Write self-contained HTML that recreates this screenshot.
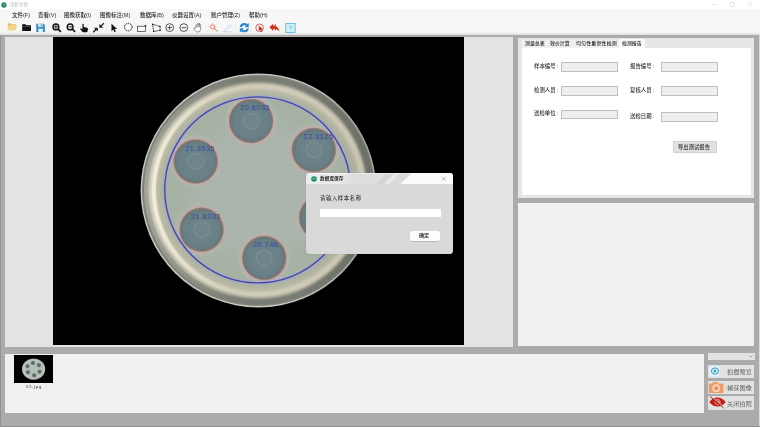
<!DOCTYPE html>
<html lang="zh">
<head>
<meta charset="utf-8">
<title>泽析生物</title>
<style>
html,body{margin:0;padding:0;}
body{width:760px;height:427px;overflow:hidden;background:#ababab;position:relative;
 font-family:"Liberation Sans","Noto Sans CJK SC",sans-serif;color:#000;}
.abs{position:absolute;}
svg{will-change:transform;}
#titlebar{left:0;top:0;width:760px;height:11px;background:#fff;}
#menubar{left:0;top:8.8px;width:760px;height:12.2px;background:#f7f7f7;}
#toolbar{left:0;top:21px;width:760px;height:13.9px;background:linear-gradient(#f7f7f7 0%,#f7f7f7 62%,#f1f1f1 86%,#dadada 100%);}
.t{position:absolute;white-space:nowrap;line-height:1;will-change:transform;}
.menu{font-size:5.5px;top:13.1px;color:#2a2a2a;font-weight:500;}
#canvasPanel{left:5px;top:36.8px;width:508px;height:309.9px;background:#e3e3e3;}
#canvas{left:53.1px;top:37.2px;width:411.3px;height:308.2px;background:#000;}
#rightTop{left:518px;top:38.3px;width:235.9px;height:159.6px;background:#e6e6e6;}
#tabStrip{left:521.8px;top:39.6px;width:97.4px;height:8.6px;background:#f0f0f0;}
#tabBody{left:521.8px;top:48.1px;width:228.8px;height:146.7px;background:#fff;}
#tabSel{left:619px;top:39.3px;width:26.2px;height:9px;background:#fafafa;}
.tab{font-size:4.95px;top:42px;color:#2a2a2a;font-weight:500;}
.lbl{font-size:5.4px;color:#333;font-weight:500;}
.inp{position:absolute;background:#efefef;border:1px solid #bfbfbf;box-sizing:border-box;}
#rightBottom{left:518px;top:202.9px;width:236.4px;height:143.4px;background:#f0f0f0;}
#bottomPanel{left:5px;top:354px;width:698.7px;height:59px;background:#f0f0f0;}
#thumb{left:14px;top:355px;width:39.1px;height:27.7px;background:#000;}
.btn{position:absolute;background:#e1e1e1;border:1px solid #d2d2d2;box-sizing:border-box;}
.sbtn{position:absolute;left:708px;width:45.9px;height:13px;background:#e2e2e2;}
.sbtn .t{font-size:6.1px;left:18.8px;top:3.3px;letter-spacing:0.12px;color:#1a1a1a;font-weight:300;}
#combo{left:707.8px;top:352.7px;width:46.9px;height:7.1px;background:#e3e3e3;}
#dialog{left:306.2px;top:173.2px;width:146.7px;height:81.1px;background:#d9d9d9;border-radius:3.5px;overflow:hidden;box-shadow:0 0 1px rgba(0,0,0,.35);}
#dlgTitle{left:0;top:0;width:100%;height:11.3px;background:linear-gradient(135deg,rgba(222,222,222,0) 0%,rgba(222,222,222,0) 50.5%,#d4d4d4 52.5%,#d4d4d4 55.5%,#e9e9e9 56.8%,#e9e9e9 59%,#dbdbdb 59.6%,#dbdbdb 66.4%,#fbfbfb 67.2%,#fbfbfb 100%),linear-gradient(90deg,#ececec 0%,#ececec 21%,#dedede 31%,#dedede 100%);box-shadow:inset 0 0.8px 0 rgba(255,255,255,0.55);}
</style>
</head>
<body>
<div id="titlebar" class="abs">
  <svg class="abs" style="left:0.8px;top:1.6px" width="6" height="6" viewBox="0 0 6 6"><circle cx="2.9" cy="3" r="2.65" fill="#178a6e"/><path d="M1.6 3.5 L2.6 2.3 L3.3 3.2 L4.3 1.9" stroke="#a8e6d2" stroke-width="0.6" fill="none"/></svg>
  <span class="t" style="left:9.8px;top:2.7px;font-size:4.4px;letter-spacing:0.1px;color:#b6b6b6;">泽析生物</span>
  <svg class="abs" style="left:705px;top:0" width="55" height="10" viewBox="705 0 55 10"><g stroke="#c6c6c6" stroke-width="0.45" fill="none"><path d="M712.2 4.6 h4"/><rect x="730.2" y="2.4" width="3.9" height="3.9"/><path d="M748.1 2.3 l4 4 M752.1 2.3 l-4 4"/></g></svg>
</div>
<div id="menubar" class="abs"></div>
<span class="t menu" style="left:12px">文件(F)</span>
<span class="t menu" style="left:37.8px">查看(V)</span>
<span class="t menu" style="left:64.1px">图像获取(I)</span>
<span class="t menu" style="left:100.4px">图像标注(M)</span>
<span class="t menu" style="left:140.2px">数据库(B)</span>
<span class="t menu" style="left:172.2px">仪器设置(A)</span>
<span class="t menu" style="left:210.8px">账户管理(Z)</span>
<span class="t menu" style="left:248.8px">帮助(H)</span>
<div id="toolbar" class="abs"></div>
<svg id="tbicons" class="abs" style="left:0;top:21px" width="300" height="15" viewBox="0 21 300 15">
  <!-- open folder (yellow) -->
  <path d="M7.8 23.3 h3.2 l0.9 1 h4.2 v1.4 h-6.6 l-1.7 4.4 z" fill="#efbf66"/>
  <path d="M9.5 25.7 h7.6 l-1.6 4.9 h-7.7 z" fill="#f6d48c"/>
  <!-- black folder -->
  <path d="M22.2 24.2 h3.3 l0.9 1 h4.6 v5.8 h-8.8 z" fill="#111"/>
  <rect x="22.2" y="26.1" width="8.8" height="0.45" fill="#777"/>
  <!-- save -->
  <path d="M36.2 23.8 h7.4 l1.3 1.3 v6.8 h-8.7 z" fill="#378fc6"/>
  <rect x="38" y="23.8" width="5" height="3.1" fill="#c6e6f5"/>
  <rect x="41.3" y="24.2" width="1" height="2.1" fill="#378fc6"/>
  <rect x="38.4" y="28.8" width="4.4" height="3.1" fill="#eef7fc"/>
  <!-- zoom in -->
  <g stroke="#111" fill="none" stroke-linecap="round">
    <circle cx="55.9" cy="26.9" r="2.9" stroke-width="1.4"/>
    <path d="M58.2 29.2 L60.4 31.3" stroke-width="1.7"/>
    <path d="M54.4 26.9 h3 M55.9 25.4 v3" stroke-width="0.9"/>
    <circle cx="70.1" cy="26.9" r="2.9" stroke-width="1.4"/>
    <path d="M72.4 29.2 L74.6 31.3" stroke-width="1.7"/>
    <path d="M68.6 26.9 h3" stroke-width="0.9"/>
  </g>
  <!-- pointing hand (filled) -->
  <path d="M82.4 24 q0.7 -0.6 1.3 0 v3 l3.4 0.7 q0.9 0.3 0.8 1.3 l-0.4 2.4 q-0.2 0.8 -1 0.8 h-3.2 q-0.7 0 -1.1 -0.6 l-2.1 -2.7 q0.4 -0.9 1.3 -0.4 l1 0.9 z" fill="#111"/>
  <!-- shrink arrows -->
  <g fill="#1a1a1a" stroke="#1a1a1a" stroke-width="1.3">
    <path d="M103.8 23.2 L100.6 26.4" fill="none"/>
    <path d="M99.3 23.9 v3.9 h3.9 z" stroke="none"/>
    <path d="M93.2 32.2 L96.4 29" fill="none"/>
    <path d="M97.8 31.6 v-3.9 h-3.9 z" stroke="none"/>
  </g>
  <!-- cursor -->
  <path d="M111.5 23.8 v7.4 l1.8 -1.6 l1.2 2.6 l1.3 -0.6 l-1.2 -2.5 h2.5 z" fill="#111"/>
  <!-- dashed circle -->
  <circle cx="128.3" cy="27.1" r="3.8" fill="none" stroke="#222" stroke-width="1" stroke-dasharray="1.6 0.8"/>
  <!-- rectangle -->
  <rect x="137.4" y="26.2" width="8.1" height="5.2" fill="none" stroke="#222" stroke-width="0.65"/>
  <path d="M144.4 25.8 h2.2 M145.5 24.8 v2" stroke="#111" stroke-width="0.6"/>
  <!-- polygon -->
  <path d="M152.6 24.3 L160 26.4 L160.1 30.4 L153.6 31.4 Z" fill="none" stroke="#222" stroke-width="0.65"/>
  <g fill="#111"><rect x="152" y="23.7" width="1.2" height="1.2"/><rect x="159.4" y="25.8" width="1.2" height="1.2"/><rect x="159.5" y="29.8" width="1.2" height="1.2"/><rect x="153" y="30.8" width="1.2" height="1.2"/></g>
  <!-- plus / minus circle -->
  <g fill="none" stroke="#111" stroke-width="0.7">
    <circle cx="169.7" cy="27.6" r="3.9"/><path d="M167.5 27.6 h4.4 M169.7 25.4 v4.4"/>
    <circle cx="183.8" cy="27.6" r="3.9"/><path d="M181.6 27.6 h4.4"/>
  </g>
  <!-- open hand outline -->
  <path d="M196 27.8 v-2.8 q0.55 -0.8 1.1 0 v-1.1 q0.6 -0.8 1.2 0 v-0.4 q0.6 -0.8 1.2 0 v1.1 q0.55 -0.7 1.1 0 v4.4 q0 3 -2.8 3 q-1.7 0 -2.6 -1.4 l-1.4 -2.4 q0.5 -0.9 1.3 -0.2 z M197.1 25 v2.2 M198.3 24 v3.2 M199.5 23.6 v3.6" fill="#fff" stroke="#555" stroke-width="0.6" stroke-linejoin="round"/>
  <!-- magnifier red -->
  <g stroke="#e2604a" fill="none" stroke-linecap="round">
    <circle cx="212.6" cy="26.8" r="2.1" stroke-width="0.7"/>
    <path d="M214.3 28.5 L217.6 31.4" stroke-width="0.9"/>
    <path d="M212.6 23.4 v0.8 M212.6 29.4 v0.8 M209.2 26.8 h0.8 M215.2 26.8 h0.8 M210.2 24.4 l0.6 0.6 M215 24.4 l-0.6 0.6 M210.2 29.2 l0.6 -0.6" stroke-width="0.5" stroke="#ef9a7a"/>
  </g>
  <!-- pencil light -->
  <g stroke="#b9d6ec" fill="none" stroke-width="0.7">
    <path d="M224.4 29.8 L229.8 24.4 L231.4 26 L226 31.2 L223.8 31.6 Z" fill="#eef5fb"/>
    <path d="M223 31.8 h9.4"/>
  </g>
  <!-- refresh -->
  <g fill="#2887cf" transform="translate(244.3 27.7) scale(1.15) translate(-244 -27.6)">
    <path d="M240 27 q0.6 -3.4 4.2 -3.4 q1.6 0 2.6 0.9 l1.1 -1 v3.6 h-3.6 l1.2 -1.2 q-0.6 -0.5 -1.4 -0.5 q-1.8 0 -2.3 1.6 z"/>
    <path d="M248 28.2 q-0.6 3.4 -4.2 3.4 q-1.6 0 -2.6 -0.9 l-1.1 1 v-3.6 h3.6 l-1.2 1.2 q0.6 0.5 1.4 0.5 q1.8 0 2.3 -1.6 z"/>
  </g>
  <!-- red circle cursor -->
  <circle cx="259.6" cy="27.8" r="3.8" fill="none" stroke="#c02a1c" stroke-width="0.7"/>
  <path d="M258.8 25.4 v5.6 l1.4 -1.2 l1.1 2.3 l1 -0.5 l-1.1 -2.2 h2 z" fill="#cf2a1a"/>
  <!-- red back arrow -->
  <path d="M269.4 27.2 L273.2 23.8 v1.9 q5.6 0.2 6 5.8 q-1.8 -2.9 -6 -2.8 v2.2 z" fill="#d8301c"/>
  <path d="M272.6 27.2 L276 24 v1.8 l-1.8 1.4 l1.8 1.6 v1.6 z" fill="#d8301c"/>
  <!-- help -->
  <rect x="285.7" y="23.5" width="9.4" height="9" fill="#cfeff6" stroke="#55c0da" stroke-width="0.9"/>
  <text x="288.9" y="30.2" font-size="6" font-family="'Liberation Sans',sans-serif" fill="#3fb2d0">?</text>
  <!-- separators -->
  <g stroke="#e2e2e2" stroke-width="0.4"><path d="M48.6 23 v10 M106.4 23 v10 M206 23 v10 M236 23 v10 M251.6 23 v10 M282.6 23 v10"/></g>
</svg>

<div id="canvasPanel" class="abs"></div>
<div id="canvas" class="abs"></div>
<svg id="dish" class="abs" style="left:53px;top:37px" width="412" height="309" viewBox="53 37 412 309">
  <defs>
    <radialGradient id="rim" cx="0.5" cy="0.5" r="0.5">
      <stop offset="0" stop-color="#abb5ad"/>
      <stop offset="0.5" stop-color="#aab4ab"/>
      <stop offset="0.76" stop-color="#a5b1a2"/>
      <stop offset="0.797" stop-color="#a9b2a2"/>
      <stop offset="0.82" stop-color="#b0b4a2"/>
      <stop offset="0.85" stop-color="#b8b8a6"/>
      <stop offset="0.875" stop-color="#cdc9b4"/>
      <stop offset="0.895" stop-color="#d2ceb8"/>
      <stop offset="0.915" stop-color="#b4b2a4"/>
      <stop offset="0.93" stop-color="#8a8c80"/>
      <stop offset="0.945" stop-color="#787c72"/>
      <stop offset="0.975" stop-color="#797d73"/>
      <stop offset="0.985" stop-color="#8c9084"/>
      <stop offset="0.992" stop-color="#c8ccc6"/>
      <stop offset="1" stop-color="#c4c8c2"/>
    </radialGradient>
    <linearGradient id="hl" gradientUnits="userSpaceOnUse" x1="140" y1="0" x2="236" y2="0">
      <stop offset="0" stop-color="#fffbe8" stop-opacity="0.8"/>
      <stop offset="1" stop-color="#fffbe8" stop-opacity="0"/>
    </linearGradient>
    <linearGradient id="dk" gradientUnits="userSpaceOnUse" x1="290" y1="0" x2="376" y2="0">
      <stop offset="0" stop-color="#4a4e46" stop-opacity="0"/>
      <stop offset="1" stop-color="#4a4e46" stop-opacity="0.28"/>
    </linearGradient>
    <radialGradient id="zone" cx="0.5" cy="0.5" r="0.5">
      <stop offset="0" stop-color="#6f868b"/>
      <stop offset="0.252" stop-color="#6e8489"/>
      <stop offset="0.285" stop-color="#7d9296"/>
      <stop offset="0.32" stop-color="#6c8388"/>
      <stop offset="0.64" stop-color="#688086"/>
      <stop offset="0.715" stop-color="#637c81"/>
      <stop offset="0.745" stop-color="#6e7672"/>
      <stop offset="0.79" stop-color="#8a7674"/>
      <stop offset="0.815" stop-color="#a48c88"/>
      <stop offset="0.84" stop-color="#bcaeaa"/>
      <stop offset="0.885" stop-color="#baaeaa"/>
      <stop offset="0.915" stop-color="#aeb4a8"/>
      <stop offset="0.96" stop-color="#aeb8ac" stop-opacity="0.8"/>
      <stop offset="1" stop-color="#acb6ac" stop-opacity="0"/>
    </radialGradient>
    <filter id="tb" x="-5%" y="-20%" width="110%" height="140%"><feGaussianBlur stdDeviation="0.32"/></filter>
    <mask id="ringmask"><rect x="53" y="37" width="412" height="309" fill="#000"/><ellipse cx="258.4" cy="190.4" rx="114.4" ry="113.6" fill="#6a6a6a"/><ellipse cx="258.4" cy="190.4" rx="110.5" ry="109.7" fill="#999"/><ellipse cx="258.4" cy="190.4" rx="106.4" ry="105.6" fill="#fff"/><ellipse cx="258.4" cy="190.4" rx="102.6" ry="101.8" fill="#000"/></mask>
    <mask id="ringmask2"><rect x="53" y="37" width="412" height="309" fill="#000"/><ellipse cx="258.4" cy="190.4" rx="117.8" ry="117" fill="#fff"/><ellipse cx="258.4" cy="190.4" rx="108.5" ry="107.7" fill="#333"/><circle cx="257.6" cy="189.9" r="94.5" fill="#000"/></mask>
  </defs>
  <ellipse cx="258.4" cy="190.4" rx="117.8" ry="117" fill="url(#rim)"/>
  <ellipse cx="258.4" cy="190.4" rx="117.8" ry="117" fill="url(#hl)" mask="url(#ringmask)"/>
  <ellipse cx="258.4" cy="190.4" rx="117.8" ry="117" fill="url(#dk)" mask="url(#ringmask2)"/>
  <g fill="url(#zone)">
    <circle cx="251.1" cy="121" r="27"/>
    <circle cx="313.8" cy="150" r="27"/>
    <circle cx="195.7" cy="161.5" r="27"/>
    <circle cx="201.6" cy="229.7" r="27"/>
    <circle cx="264.2" cy="258" r="27"/>
    <circle cx="321" cy="217.5" r="27"/>
  </g>
  <circle cx="257.7" cy="189.8" r="93" fill="none" stroke="#a6a6da" stroke-width="3.1" opacity="0.85"/>
  <circle cx="257.7" cy="189.8" r="93" fill="none" stroke="#45489c" stroke-width="1.35"/>
  <g font-family="'Liberation Sans',sans-serif" font-size="7.4" fill="#3446a2" letter-spacing="0.45" filter="url(#tb)">
    <text x="240.2" y="110.2">20.6035</text>
    <text x="303.6" y="138.8">22.3125</text>
    <text x="185.2" y="150.8">21.3535</text>
    <text x="191" y="219.2">21.8233</text>
    <text x="253" y="246.9">20.746</text>
  </g>
</svg>

<div id="rightTop" class="abs"></div>
<div id="tabStrip" class="abs"></div>
<div id="tabSel" class="abs"></div>
<div id="tabBody" class="abs"></div>
<span class="t tab" style="left:525px">测量总表</span>
<span class="t tab" style="left:549.8px">效价计算</span>
<span class="t tab" style="left:575.8px;letter-spacing:0.18px">均匀性重复性检测</span>
<span class="t tab" style="left:621.7px;top:41.9px">检测报告</span>

<span class="t lbl" style="left:534px;top:64.3px">样本编号<span style="margin-left:1.1px">:</span></span>
<div class="inp" style="left:561px;top:62px;width:57px;height:9.8px"></div>
<span class="t lbl" style="left:630.2px;top:64.3px">报告编号<span style="margin-left:1.1px">:</span></span>
<div class="inp" style="left:661px;top:62px;width:57px;height:9.8px"></div>
<span class="t lbl" style="left:534px;top:88.2px">检测人员<span style="margin-left:1.1px">:</span></span>
<div class="inp" style="left:561px;top:86px;width:57px;height:9.8px"></div>
<span class="t lbl" style="left:630.2px;top:88.2px">复核人员<span style="margin-left:1.1px">:</span></span>
<div class="inp" style="left:661px;top:86px;width:57px;height:9.8px"></div>
<span class="t lbl" style="left:534px;top:111.3px">送检单位<span style="margin-left:1.1px">:</span></span>
<div class="inp" style="left:561px;top:110px;width:57px;height:9.4px"></div>
<span class="t lbl" style="left:630.2px;top:114.2px">送检日期<span style="margin-left:1.1px">:</span></span>
<div class="inp" style="left:661px;top:112px;width:57px;height:9.6px"></div>
<div class="btn" style="left:672.9px;top:141.1px;width:44.6px;height:11.6px"><span class="t lbl" style="left:4.5px;top:2.6px;font-size:5.35px">导出测试报告</span></div>

<div id="rightBottom" class="abs"></div>

<div id="bottomPanel" class="abs"></div>
<div id="thumb" class="abs"></div>
<svg class="abs" style="left:14px;top:355px" width="39.2" height="27.8" viewBox="0 0 39.2 27.8">
  <defs><radialGradient id="tz"><stop offset="0" stop-color="#58645f"/><stop offset="0.55" stop-color="#66726d"/><stop offset="1" stop-color="#aab6ae" stop-opacity="0"/></radialGradient></defs>
  <ellipse cx="19.6" cy="14.1" rx="11.7" ry="10.7" fill="#8e9690"/>
  <ellipse cx="19.6" cy="14.1" rx="11.2" ry="10.2" fill="#bcc6be"/>
  <ellipse cx="19.6" cy="14.1" rx="9.4" ry="8.6" fill="#b2beb6"/>
  <g fill="url(#tz)"><circle cx="18.9" cy="7.9" r="2.9"/><circle cx="24.9" cy="10.2" r="2.9"/><circle cx="25.6" cy="16.7" r="2.9"/><circle cx="20.2" cy="20.3" r="2.9"/><circle cx="14" cy="17.2" r="2.9"/><circle cx="13.5" cy="11.2" r="2.9"/></g>
</svg>
<span class="t" style="left:25.6px;top:384.3px;font-size:5px;letter-spacing:0.5px;font-family:'Liberation Serif',serif;color:#333;">03.jpg</span>

<div id="combo" class="abs"><svg class="abs" style="left:41.6px;top:2.4px" width="4" height="3" viewBox="0 0 4 3"><path d="M0.5 0.6 L2 2.2 L3.5 0.6" stroke="#666" stroke-width="0.55" fill="none"/></svg></div>
<div class="sbtn" style="top:364.8px;height:13.4px">
  <svg class="abs" style="left:0;top:0.6px" width="19" height="13" viewBox="0 0 19 13">
    <rect x="0.9" y="0.8" width="11.3" height="10.8" fill="#e2f1f9"/>
    <path d="M1.1 2.8 v-1.8 h2 M10 1 h2 v1.8 M12 9.6 v1.8 h-2 M3.1 11.4 h-2 v-1.8" fill="none" stroke="#b5dcf0" stroke-width="0.5"/>
    <ellipse cx="7" cy="6" rx="3.7" ry="3.1" fill="#c2e7f3" stroke="#4a9cba" stroke-width="0.95"/>
    <ellipse cx="7" cy="6" rx="1.9" ry="1.7" fill="#a6d9ea"/>
    <circle cx="7" cy="6" r="0.95" fill="#2d7da3"/>
  </svg>
  <span class="t" style="top:4.1px">拍摄预览</span></div>
<div class="sbtn" style="top:380.6px;height:13.7px">
  <svg class="abs" style="left:0;top:0" width="22" height="14" viewBox="0 0 22 14">
    <path d="M0.8 2.4 h3 l1 -1.4 h4.8 l1 1.4 h4.9 v9.6 h-14.7 z" fill="#eb9c68"/>
    <rect x="15.5" y="5" width="4.2" height="0.7" fill="#f3c9aa"/><rect x="15.5" y="7.2" width="4.2" height="0.7" fill="#f3c9aa"/>
    <circle cx="8.2" cy="7.2" r="3.9" fill="#f8d6bc"/>
    <circle cx="8.2" cy="7.2" r="2.3" fill="#ee9e6e"/>
    <circle cx="8.2" cy="7.2" r="0.9" fill="#e58450"/>
  </svg>
  <span class="t" style="top:4.1px">捕获图像</span></div>
<div class="sbtn" style="top:396.4px;height:13.4px">
  <svg class="abs" style="left:0;top:0" width="20" height="14" viewBox="0 0 20 14">
    <path d="M1.4 6 Q4.6 1.4 9.5 1.4 Q14.4 1.4 17.6 6 Q14.4 10.6 9.5 10.6 Q4.6 10.6 1.4 6 Z" fill="#c71c12"/>
    <circle cx="9.6" cy="6" r="2.6" fill="none" stroke="#f3b4ae" stroke-width="0.8"/>
    <circle cx="10.4" cy="5.3" r="0.8" fill="#f3b4ae"/>
    <path d="M3.2 0.2 L16.4 11.6" stroke="#ecdcda" stroke-width="0.9"/>
    <path d="M2.2 0.5 L15.6 12.1" stroke="#8a140e" stroke-width="0.9"/>
  </svg>
  <span class="t" style="top:4.2px">关闭拍照</span></div>

<div id="dialog" class="abs">
  <div id="dlgTitle" class="abs"></div>
  <svg class="abs" style="left:5.3px;top:3px" width="6" height="6" viewBox="0 0 6 6"><circle cx="3" cy="3" r="2.8" fill="#1d8f72"/><path d="M1.6 3.4 L2.6 2.2 L3.3 3.1 L4.2 1.9" stroke="#bfeedd" stroke-width="0.6" fill="none"/></svg>
  <span class="t" style="left:13.5px;top:3.7px;font-size:4.7px;color:#000;font-weight:500;">数据库保存</span>
  <svg class="abs" style="left:135.1px;top:3.1px" width="6" height="6" viewBox="0 0 6 6"><path d="M0.7 0.7 L4.7 4.7 M4.7 0.7 L0.7 4.7" stroke="#707070" stroke-width="0.5"/></svg>
  <span class="t" style="left:14px;top:22.8px;font-size:5.3px;color:#111;letter-spacing:0.66px">请输入样本名称</span>
  <div class="abs" style="left:14.1px;top:35.6px;width:120.6px;height:8.2px;background:#fff;"></div>
  <div class="abs" style="left:103.6px;top:57.4px;width:30.2px;height:10px;background:#fdfdfd;border-radius:2.6px;box-shadow:0 0.4px 0.6px rgba(0,0,0,.3);"><span class="t" style="left:9.6px;top:2.5px;font-size:5.1px;color:#111;font-weight:500;">确定</span></div>
</div>
<div class="abs" style="left:0;top:426px;width:760px;height:1px;background:#8e8e8e;"></div>
<div class="abs" style="left:759px;top:35px;width:1px;height:391px;background:#dcdcdc;"></div>
<div class="abs" style="left:0;top:35px;width:1px;height:392px;background:#939393;"></div>
</body>
</html>
